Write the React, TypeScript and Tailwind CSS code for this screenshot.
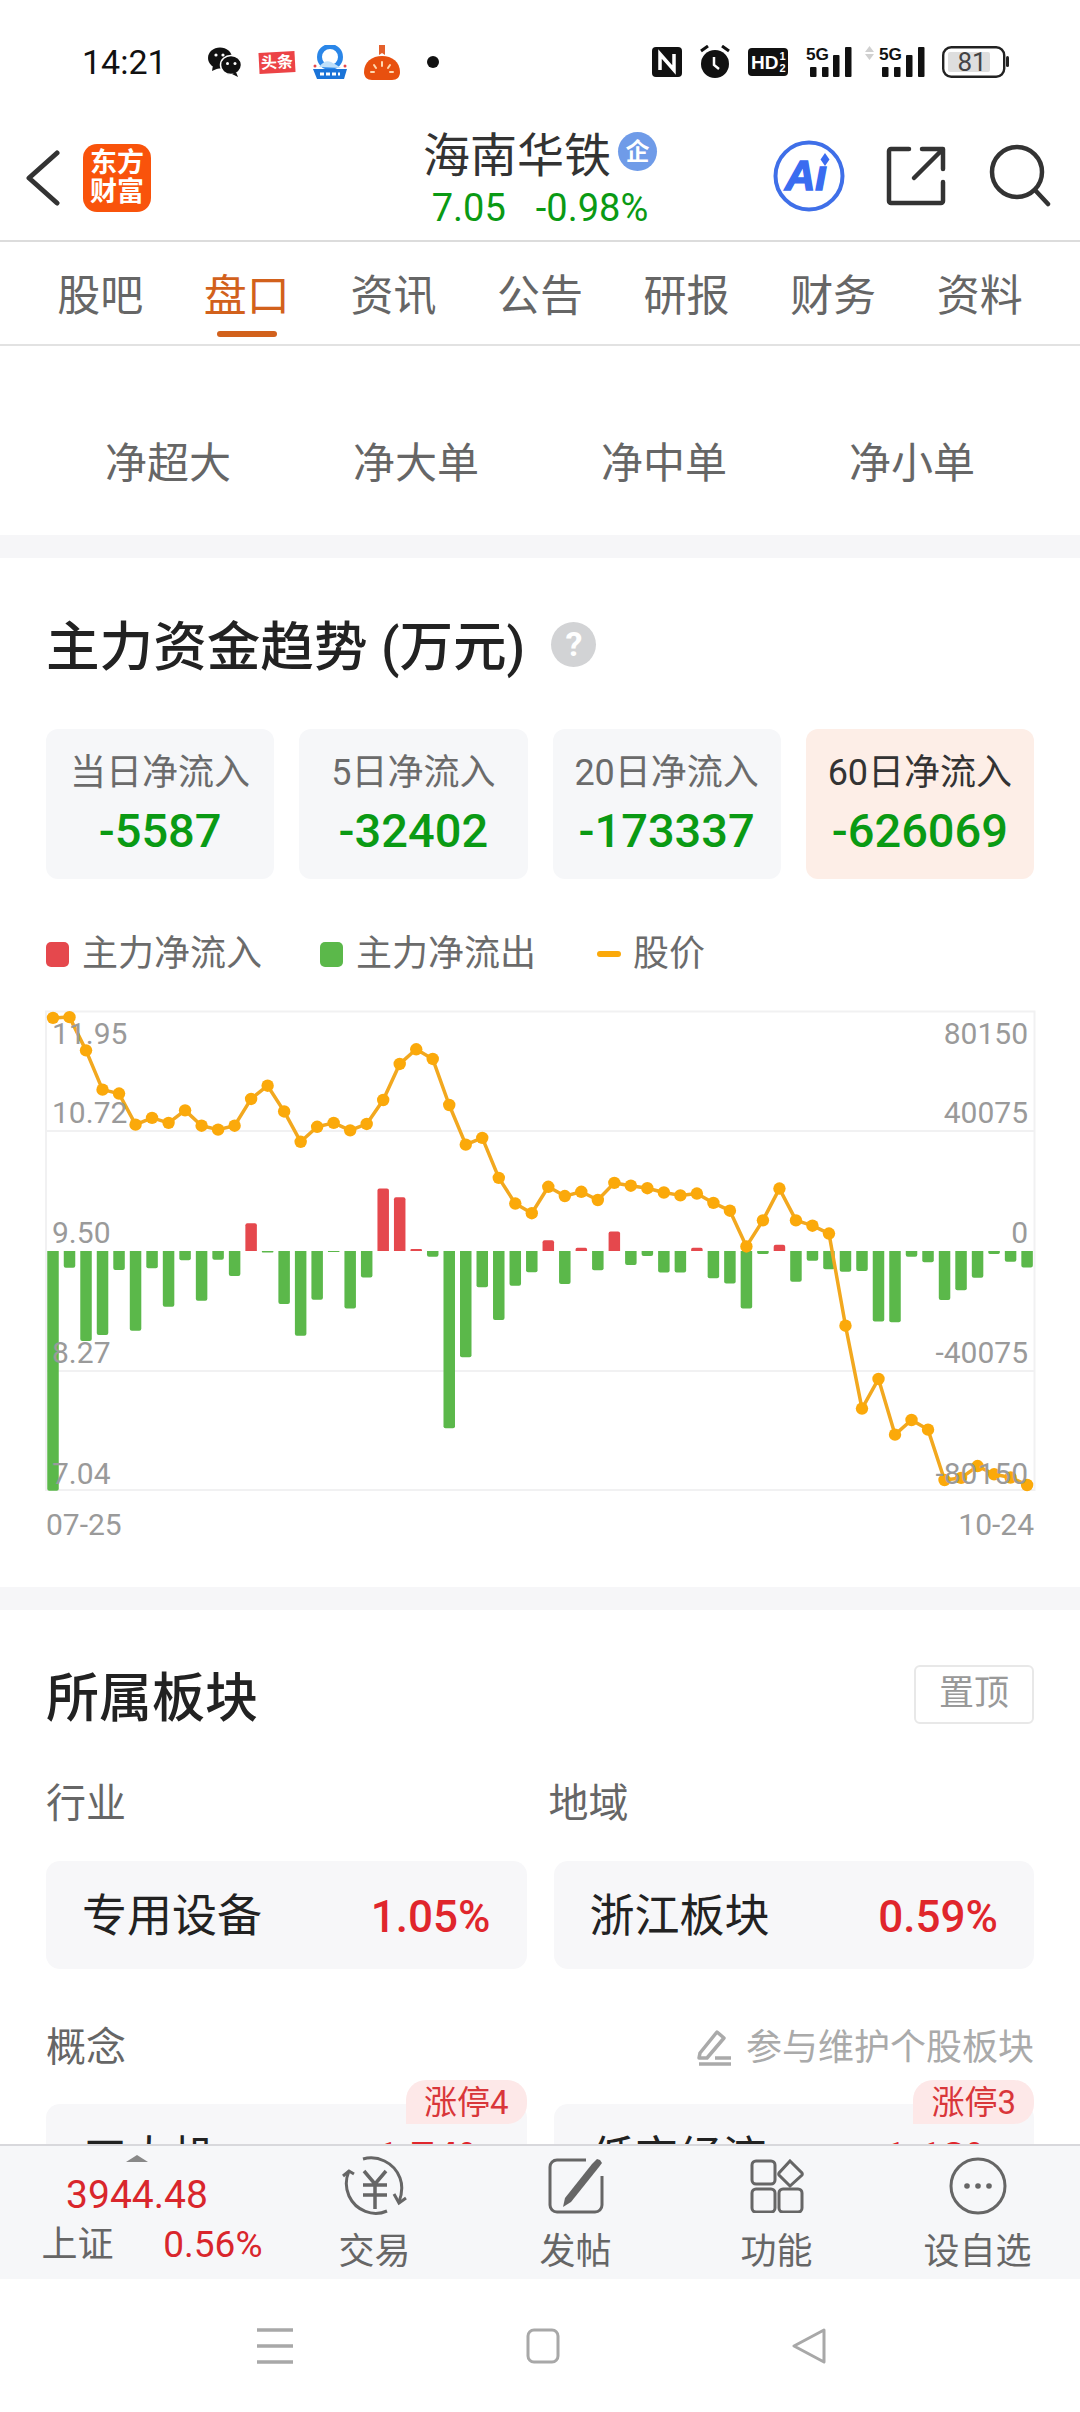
import React from "react";

const cn = "font-['Roboto','Noto_Sans_CJK_SC',sans-serif]";

const barsZ = [-671,-47,-252,-235,-53,-223,-48,-156,-26,-139,-24,-70,78,-4,-148,-237,-136,-2,-161,-74,175,151,6,-16,-496,-297,-101,-193,-97,-59,30,-92,9,-54,55,-39,-14,-60,-60,9,-76,-91,-161,-8,18,-86,-27,-51,-58,-56,-197,-199,-16,-31,-137,-110,-75,-8,-30,-46];
const lineZ = [78,76,169,279,290,377,358,372,337,380,391,380,305,268,340,425,383,372,393,375,308,207,166,193,322,433,414,526,598,625,551,577,565,588,540,548,555,567,575,570,596,618,718,645,556,645,660,682,940,1172,1089,1245,1204,1231,1372,1366,1333,1356,1365,1386];
const px = (i: number) => 53 + i * 16.51;
const py = (z: number) => z / 2.8 - 10;
const zero = py(731);

function Chart() {
  const pts = lineZ.map((z, i) => `${px(i).toFixed(1)},${py(z).toFixed(1)}`).join(" ");
  const w = 11.5;
  const left = [["11.95", 33], ["10.72", 112.5], ["9.50", 232], ["8.27", 352.5], ["7.04", 473]] as const;
  const right = [["80150", 33], ["40075", 112.5], ["0", 232], ["-40075", 352.5], ["-80150", 473]] as const;
  return (
    <svg width="1080" height="500" viewBox="0 0 1080 500" className="block">
      <g stroke="#f1f1f2" strokeWidth="2" fill="none">
        <rect x="46" y="11.5" width="988.5" height="478.5" />
        <line x1="46" x2="1034" y1="131" y2="131" />
        <line x1="46" x2="1034" y1="371" y2="371" />
      </g>
      {barsZ.map((z, i) => {
        const h = Math.max(Math.abs(z) / 2.8, 1);
        const x = px(i) - w / 2;
        const r = Math.min(2, h / 2);
        const d = z < 0
          ? `M${x},${zero}h${w}v${h - r}q0,${r} ${-r},${r}h${-(w - 2 * r)}q${-r},0 ${-r},${-r}z`
          : `M${x},${zero}h${w}v${-(h - r)}q0,${-r} ${-r},${-r}h${-(w - 2 * r)}q${-r},0 ${-r},${r}z`;
        return <path key={i} d={d} fill={z < 0 ? "#5bb84a" : "#e5484d"} />;
      })}
      <polyline points={pts} fill="none" stroke="#f2a81f" strokeWidth="3.5" strokeLinejoin="round" />
      {lineZ.map((z, i) => (
        <circle key={i} cx={px(i)} cy={py(z)} r="6.2" fill="#fba90a" />
      ))}
      {left.map(([t, y]) => (
        <text key={t} x="52" y={y + 10.5} className="fill-[#9a9a9a] text-[30px]">{t}</text>
      ))}
      {right.map(([t, y]) => (
        <text key={t} x="1028" y={y + 10.5} textAnchor="end" className="fill-[#9a9a9a] text-[30px]">{t}</text>
      ))}
    </svg>
  );
}

function StatusLeftIcons() {
  return (
    <div className="flex items-center">
      <svg width="34" height="30" viewBox="0 0 34 30" className="ml-[1px]">
        <ellipse cx="12" cy="11" rx="12" ry="10.5" fill="#111" />
        <path d="M5 18l-1 6 7-3z" fill="#111" />
        <ellipse cx="23" cy="18" rx="10.5" ry="9.5" fill="#111" stroke="#fff" strokeWidth="1.5" />
        <path d="M28 25l2 5-6-3z" fill="#111" />
        <circle cx="8" cy="8" r="1.6" fill="#fff" />
        <circle cx="15" cy="8" r="1.6" fill="#fff" />
        <circle cx="19.5" cy="16.5" r="1.5" fill="#fff" />
        <circle cx="27" cy="16.5" r="1.5" fill="#fff" />
      </svg>
      <div className="ml-[17px] flex h-[21px] w-[36px] -rotate-3 items-center justify-center bg-[#ec4346] text-[16px] leading-none font-bold text-white">头条</div>
      <svg width="38" height="35" viewBox="0 0 38 35" className="ml-[16px]">
        <circle cx="19" cy="12" r="10.5" fill="none" stroke="#2a86e8" strokeWidth="5" />
        <path d="M8 22q6-8 12-5t10 6z" fill="#bfe0fa" />
        <path d="M2 24h34l-3 10H6z" fill="#1b74d8" />
        <circle cx="4" cy="21" r="1.5" fill="#e5484d" />
        <circle cx="34" cy="21" r="1.5" fill="#e5484d" />
        <path d="M9 29h20" stroke="#fff" strokeWidth="3" strokeDasharray="4 2" />
      </svg>
      <svg width="38" height="35" viewBox="0 0 38 35" className="ml-[14px]">
        <path d="M16 0h6v10l-3-2-3 2z" fill="#e4602c" />
        <path d="M1 27C1 17 9 11 19 11s18 6 18 16c0 5-3 8-8 8H9c-5 0-8-3-8-8z" fill="#e8500f" />
        <path d="M19 17v4M11 20l2 3M27 20l-2 3M8 27h3M27 27h3" stroke="#ffd9b0" strokeWidth="2" strokeLinecap="round" />
      </svg>
      <div className="ml-[26px] h-[12px] w-[12px] rounded-full bg-[#111]" />
    </div>
  );
}

function Bars({ xs }: { xs: number[] }) {
  const hs = [10, 10, 22, 30];
  return (
    <>
      {xs.map((x, i) => (
        <rect key={i} x={x} y={32 - hs[i]} width="6.5" height={hs[i]} rx="1" fill="#111" />
      ))}
    </>
  );
}

function StatusRightIcons() {
  return (
    <div className="flex items-center">
      <svg width="30" height="30" viewBox="0 0 30 30">
        <rect width="30" height="30" rx="4" fill="#111" />
        <path d="M8 23V7l14 16V7" fill="none" stroke="#fff" strokeWidth="3.5" />
      </svg>
      <svg width="34" height="34" viewBox="0 0 34 34" className="ml-[16px]">
        <circle cx="17" cy="19" r="14" fill="#111" />
        <path d="M3 6l7-5M31 6l-7-5" stroke="#111" strokeWidth="3" />
        <path d="M16 12v8l5 4" fill="none" stroke="#fff" strokeWidth="2.5" />
      </svg>
      <div className="relative ml-[16px] flex h-[28px] w-[40px] items-center rounded-[4px] bg-[#111] pl-[3px] font-['Liberation_Sans',sans-serif] text-[19px] leading-none font-bold text-white">
        HD
        <span className="ml-[1px] flex flex-col text-[11px] leading-[12px]"><span>1</span><span>2</span></span>
      </div>
      <svg width="48" height="34" viewBox="0 0 48 34" className="ml-[18px]">
        <text x="0" y="15" className="fill-[#111] text-[17px] font-bold" fontFamily="Liberation Sans" textLength="23" lengthAdjust="spacingAndGlyphs">5G</text>
        <Bars xs={[4, 16, 27, 39]} />
      </svg>
      <svg width="62" height="34" viewBox="0 0 62 34" className="ml-[11px]">
        <path d="M0 7l4.5-6 4.5 6zM0 9l4.5 6 4.5-6z" fill="#d0d0d0" />
        <text x="14" y="15" className="fill-[#111] text-[17px] font-bold" fontFamily="Liberation Sans" textLength="23" lengthAdjust="spacingAndGlyphs">5G</text>
        <Bars xs={[17, 29, 41, 53]} />
      </svg>
      <svg width="67" height="32" viewBox="0 0 67 32" className="ml-[15px]">
        <rect x="1.2" y="1.2" width="61" height="29.6" rx="8" fill="none" stroke="#222" strokeWidth="2.4" />
        <rect x="6" y="6" width="42" height="20" rx="2" fill="#dedede" />
        <text x="30" y="25" textAnchor="middle" className="fill-[#444] text-[26px]">81</text>
        <rect x="64" y="10" width="3" height="11" rx="1.5" fill="#222" />
      </svg>
    </div>
  );
}

function Card({ label, value, active }: { label: string; value: string; active?: boolean }) {
  return (
    <div className={`flex h-[150px] flex-col items-center rounded-[12px] pt-[22px] ${active ? "bg-[#fdeee7]" : "bg-[#f6f7f9]"}`}>
      <div className={`text-[36px] leading-[44px] ${active ? "text-[#333]" : "text-[#6b6b6b]"}`}>{label}</div>
      <div className="mt-[8px] text-[47px] leading-[56px] font-medium text-[#0a9a14]">{value}</div>
    </div>
  );
}

function Block({ name, value }: { name: string; value: string }) {
  return (
    <div className="flex h-[108px] items-center justify-between rounded-[14px] bg-[#f7f7f9] pt-[3px] pr-[36px] pl-[36px]">
      <span className="text-[45px] text-[#222]">{name}</span>
      <span className="text-[44px] font-medium text-[#e0262c]">{value}</span>
    </div>
  );
}

function Concept({ name, value, tag }: { name: string; value: string; tag: string }) {
  return (
    <div className="relative flex h-[108px] items-start justify-between rounded-[14px] bg-[#f7f7f9] px-[37px] pt-[28px]">
      <span className="text-[44px] leading-[52px] text-[#222]">{name}</span>
      <span className="text-[42px] leading-[52px] font-medium text-[#e0262c]">{value}</span>
      <span className="absolute -top-[24px] right-0 flex h-[44px] items-center rounded-t-[20px] rounded-br-[20px] bg-[#fde8e8] px-[18px] pt-[2px] text-[33px] text-[#d9363a]">{tag}</span>
    </div>
  );
}

function NavItem({ label, children }: { label: string; children: React.ReactNode }) {
  return (
    <div className="flex w-[201px] flex-col items-center pt-[10px]">
      <div className="flex h-[60px] items-center justify-center">{children}</div>
      <div className="mt-[14px] text-[36px] leading-[44px] text-[#666]">{label}</div>
    </div>
  );
}

export default function App() {
  const tabs = ["股吧", "盘口", "资讯", "公告", "研报", "财务", "资料"];
  return (
    <div className={`flex h-[2412px] w-[1080px] flex-col overflow-hidden bg-white ${cn}`}>
      {/* status bar */}
      <div className="flex h-[115px] shrink-0 items-center pt-[9px]">
        <div className="w-[207px] pl-[82px] text-[34px] leading-none text-[#111]">14:21</div>
        <StatusLeftIcons />
        <div className="ml-auto pr-[71px]">
          <StatusRightIcons />
        </div>
      </div>
      {/* header */}
      <div className="flex h-[127px] shrink-0 items-center border-b-[2px] border-[#dcdcdc]">
        <div className="flex w-[270px] items-center pl-[26px]">
          <svg width="34" height="56" viewBox="0 0 34 56">
            <path d="M31 3L3 28l28 25" fill="none" stroke="#333" strokeWidth="5" strokeLinecap="round" strokeLinejoin="round" />
          </svg>
          <div className="ml-[23px] flex h-[68px] w-[68px] flex-col items-center justify-center rounded-[14px] bg-[#f9530b] text-[27px] leading-[29px] font-bold text-white">
            <span>东方</span>
            <span>财富</span>
          </div>
        </div>
        <div className="flex flex-1 flex-col items-center">
          <div className="flex items-center">
            <span className="text-[47px] leading-[60px] text-[#333]">海南华铁</span>
            <span className="-mt-[8px] ml-[7px] flex h-[39px] w-[39px] items-center justify-center rounded-full bg-[#6f9be8] text-[24px] leading-none font-bold text-white">企</span>
          </div>
          <div className="flex text-[38px] leading-[44px] text-[#0a9a14]">
            <span>7.05</span>
            <span className="ml-[30px]">-0.98%</span>
          </div>
        </div>
        <div className="flex h-full w-[270px] items-center">
          <svg width="72" height="72" viewBox="0 0 72 72" className="-mt-[4px] -ml-[37px] shrink-0">
            <circle cx="36" cy="36" r="33.5" fill="none" stroke="#3f6fe8" strokeWidth="4" />
            <text x="12" y="50" fontFamily="Liberation Sans" stroke="#3a6cf0" strokeWidth="1.5" className="fill-[#3a6cf0] text-[42px] font-bold italic">Aı</text>
            <path d="M52 13l4.5 6.5-4.5 6.5-4.5-6.5z" fill="#3a6cf0" />
          </svg>
          <svg width="60" height="60" viewBox="0 0 60 60" className="-mt-[4px] ml-[41px] shrink-0">
            <path d="M23 3H5a2 2 0 0 0-2 2v50a2 2 0 0 0 2 2h50a2 2 0 0 0 2-2V36M36 3h21v20M56 4L28 32" fill="none" stroke="#333" strokeWidth="4.5" strokeLinecap="round" strokeLinejoin="round" />
          </svg>
          <svg width="62" height="64" viewBox="0 0 62 64" className="-mt-[4px] ml-[43px] shrink-0">
            <circle cx="28" cy="28" r="25" fill="none" stroke="#333" strokeWidth="4.5" />
            <path d="M46 46l13 14" stroke="#333" strokeWidth="4.5" strokeLinecap="round" />
          </svg>
        </div>
      </div>
      {/* tabs */}
      <div className="grid h-[104px] shrink-0 grid-cols-7 border-b-[2px] border-[#e2e2e2] px-[27px]">
        {tabs.map((t, i) => (
          <div key={t} className={`relative flex items-center justify-center pt-[7px] text-[43px] ${i === 1 ? "text-[#d2611c]" : "text-[#666]"}`}>
            {t}
            {i === 1 && <span className="absolute bottom-[7px] h-[6px] w-[60px] rounded-full bg-[#d2611c]" />}
          </div>
        ))}
      </div>
      {/* scroll content */}
      <div className="min-h-0 flex-1 overflow-hidden">
        <div className="grid h-[189px] grid-cols-4 items-center px-[44px] pt-[45px] text-center text-[42px] text-[#666]">
          <div>净超大</div>
          <div>净大单</div>
          <div>净中单</div>
          <div>净小单</div>
        </div>
        <div className="h-[23px] bg-[#f6f6f8]" />
        {/* trend */}
        <div className="h-[1029px]">
          <div className="flex items-center px-[46px] pt-[60px]">
            <span className="text-[53.6px] leading-[60px] font-medium text-[#222]">主力资金趋势 (万元)</span>
            <span className="-mt-[8px] ml-[26px] flex h-[45px] w-[45px] items-center justify-center rounded-full bg-[#d2d3d5] text-[34px] leading-none font-bold text-white">?</span>
          </div>
          <div className="mt-[51px] grid grid-cols-4 gap-[25px] px-[46px]">
            <Card label="当日净流入" value="-5587" />
            <Card label="5日净流入" value="-32402" />
            <Card label="20日净流入" value="-173337" />
            <Card label="60日净流入" value="-626069" active />
          </div>
          <div className="mt-[55px] flex h-[40px] items-center px-[46px] text-[36px] text-[#6b6b6b]">
            <span className="h-[25px] w-[23px] rounded-[5px] bg-[#e5484d]" />
            <span className="ml-[13px]">主力净流入</span>
            <span className="ml-[58px] h-[25px] w-[23px] rounded-[5px] bg-[#5bb84a]" />
            <span className="ml-[13px]">主力净流出</span>
            <span className="ml-[61px] h-[6px] w-[24px] rounded-full bg-[#fba90a]" />
            <span className="ml-[12px]">股价</span>
          </div>
          <div className="mt-[26px]">
            <Chart />
          </div>
          <div className="mt-[5px] flex justify-between px-[46px] text-[30px] leading-[40px] text-[#9a9a9a]">
            <span>07-25</span>
            <span>10-24</span>
          </div>
        </div>
        <div className="h-[23px] bg-[#f6f6f8]" />
        {/* sectors */}
        <div className="px-[46px] pt-[55px]">
          <div className="flex items-start justify-between">
            <span className="pt-[2px] text-[53px] leading-[64px] font-medium text-[#222]">所属板块</span>
            <span className="flex h-[59px] w-[120px] items-center justify-center rounded-[6px] border-[2px] border-[#e8e8e8] text-[35px] text-[#999]">置顶</span>
          </div>
          <div className="mt-[48px] grid grid-cols-2 gap-[27px] text-[40px] leading-[50px] text-[#666]">
            <div>行业</div>
            <div className="-ml-[5px]">地域</div>
          </div>
          <div className="mt-[32px] grid grid-cols-2 gap-[27px]">
            <Block name="专用设备" value="1.05%" />
            <Block name="浙江板块" value="0.59%" />
          </div>
          <div className="mt-[52px] flex h-[50px] items-center justify-between pt-[3px] text-[40px] text-[#666]">
            <span>概念</span>
            <span className="flex items-center text-[36px] text-[#aaa]">
              <svg width="36" height="38" viewBox="0 0 36 38" className="mr-[13px]">
                <path d="M3 24L20 3l7 6-17 20H2zM2 35h32" fill="none" stroke="#aaa" strokeWidth="3.5" strokeLinejoin="round" />
                <path d="M18 29h16" stroke="#aaa" strokeWidth="3.5" />
              </svg>
              参与维护个股板块
            </span>
          </div>
          <div className="mt-[33px] grid grid-cols-2 gap-[27px]">
            <Concept name="工大机" value="1.74%" tag="涨停4" />
            <Concept name="低空经济" value="1.13%" tag="涨停3" />
          </div>
        </div>
      </div>
      {/* bottom bar */}
      <div className="flex h-[135px] shrink-0 border-t-[2px] border-[#d8d8dc] bg-[#f6f7f9]">
        <div className="flex w-[274px] flex-col items-center">
          <div className="mt-[9px] h-0 w-0 border-x-[11px] border-b-[7px] border-x-transparent border-b-[#888]" />
          <div className="mt-[10px] text-[39px] leading-[46px] text-[#d9262c]">3944.48</div>
          <div className="mt-[5px] ml-[30px] flex w-[221px] justify-between text-[36px] leading-[44px]">
            <span className="text-[#666]">上证</span>
            <span className="text-[37px] text-[#d9262c]">0.56%</span>
          </div>
        </div>
        <NavItem label="交易">
          <svg width="66" height="60" viewBox="0 0 66 60" fill="none" stroke="#666" strokeWidth="3">
            <path d="M21 3C35-1 52 6 58 22c3 8 2 16-1 24" />
            <path d="M52 38l5 9 7-5" />
            <path d="M45 55C31 61 14 55 7 40 3 31 4 22 7 15" />
            <path d="M1 20l6-5 5 3" />
            <path d="M22 15l11 13 11-13M21 29h24M21 39h24M33 28v25" strokeWidth="3.5" />
          </svg>
        </NavItem>
        <NavItem label="发帖">
          <svg width="56" height="56" viewBox="0 0 56 56" fill="none" stroke="#666" strokeWidth="3">
            <path d="M38 2H9a7 7 0 0 0-7 7v38a7 7 0 0 0 7 7h38a7 7 0 0 0 7-7V18" />
            <path d="M52 2l-3-1-5 5-27 34-2 9 8-5L51 9l3-4z" fill="#666" stroke="none" />
          </svg>
        </NavItem>
        <NavItem label="功能">
          <svg width="54" height="54" viewBox="0 0 54 54" fill="none" stroke="#666" strokeWidth="3">
            <rect x="2" y="2" width="23" height="23" rx="4" />
            <rect x="2" y="30" width="23" height="23" rx="4" />
            <rect x="29" y="30" width="23" height="23" rx="4" />
            <path d="M40 2l12 12a2 2 0 0 1 0 2L40 27 29 16a2 2 0 0 1 0-2z" />
          </svg>
        </NavItem>
        <NavItem label="设自选">
          <svg width="58" height="58" viewBox="0 0 58 58" fill="none">
            <circle cx="29" cy="29" r="27" stroke="#666" strokeWidth="3" />
            <circle cx="18" cy="29" r="2.8" fill="#666" />
            <circle cx="29" cy="29" r="2.8" fill="#666" />
            <circle cx="40" cy="29" r="2.8" fill="#666" />
          </svg>
        </NavItem>
      </div>
      {/* system nav */}
      <div className="flex h-[133px] shrink-0 items-center pl-[257px]">
        <svg width="36" height="36" viewBox="0 0 36 36" fill="none" stroke="#a8a8a8" strokeWidth="3.5">
          <path d="M0 2h36M0 18h36M0 34h36" />
        </svg>
        <svg width="34" height="36" viewBox="0 0 34 36" fill="none" stroke="#a8a8a8" strokeWidth="3" className="ml-[233px]">
          <rect x="2" y="2" width="30" height="32" rx="6" />
        </svg>
        <svg width="34" height="36" viewBox="0 0 34 36" fill="none" stroke="#a8a8a8" strokeWidth="3" strokeLinejoin="round" className="ml-[232px]">
          <path d="M32 2L2 18l30 16z" />
        </svg>
      </div>
    </div>
  );
}
